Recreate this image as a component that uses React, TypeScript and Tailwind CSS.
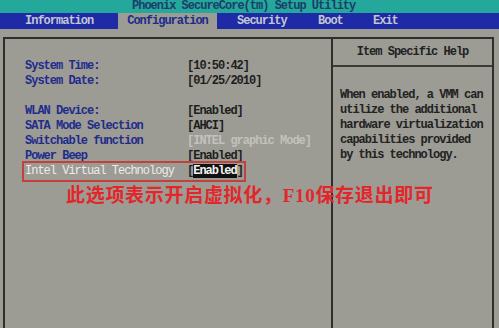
export default function App() {
  const bg = "bg-[#9c9b94]";
  return (
    <div className={`relative w-[499px] h-[328px] overflow-hidden ${bg} font-['Liberation_Mono',monospace] font-bold text-[12px] tracking-[-1px] leading-[15px] flex flex-col`}>
      <div className="h-[13px] shrink-0 bg-[#23a89b] text-[#1d3d6a] pl-[132px] leading-[13px]">
        Phoenix SecureCore(tm) Setup Utility
      </div>
      <div className="h-[16px] shrink-0 bg-[#1f2aa6] text-[#c4c6d2] flex leading-[16px]">
        <div className="w-[118px] pl-[25px]">Information</div>
        <div className={`w-[99px] ${bg} text-[#1e2b8a] text-center`}>Configuration</div>
        <div className="w-[101px] pl-[20px]">Security</div>
        <div className="w-[55px]">Boot</div>
        <div>Exit</div>
      </div>
      <div className="flex-1 pt-[8px] pl-[3px] pr-[5px]">
        <div className="h-full border-2 border-b-0 border-[#2e2e2c] flex">
          <div className="w-[328px] shrink-0 border-r-2 border-[#2e2e2c] pt-[20px] pl-[20px]">
            <Row label="System Time:" value="[10:50:42]" />
            <Row label="System Date:" value="[01/25/2010]" />
            <div className="h-[15px]" />
            <Row label="WLAN Device:" value="[Enabled]" />
            <Row label="SATA Mode Selection" value="[AHCI]" />
            <Row label="Switchable function" value="[INTEL graphic Mode]" dim />
            <Row label="Power Beep" value="[Enabled]" />
            <div className="flex w-fit outline-2 outline-[#c4403c] outline-offset-[1px]">
              <div className="w-[162px] text-[#ececea] font-normal">Intel Virtual Technology</div>
              <div className="text-[#1e1e1e]">
                [<span className="bg-[#111] text-[#f4f4f4]">Enabled</span>]
              </div>
            </div>
          </div>
          <div className="flex-1 flex flex-col">
            <div className="h-[28px] shrink-0 border-b-2 border-[#3a3a38] flex items-center justify-center text-[#222]">
              Item Specific Help
            </div>
            <div className="pt-[21px] pl-[7px] text-[#222] whitespace-pre">
              {"When enabled, a VMM can\nutilize the additional\nhardware virtualization\ncapabilities provided\nby this technology."}
            </div>
          </div>
        </div>
      </div>
      <div className="absolute left-[66px] top-[186px] text-[19px] leading-[20px] tracking-[0.7px] font-bold text-[#e2262a] font-['Liberation_Serif','Noto_Sans_CJK_SC',sans-serif]">
        此选项表示开启虚拟化，F10保存退出即可
      </div>
    </div>
  );
}

function Row({ label, value, dim }: { label: string; value: string; dim?: boolean }) {
  return (
    <div className="flex">
      <div className="w-[162px] text-[#1f2c8c]">{label}</div>
      <div className={dim ? "text-[#c2c2bc]" : "text-[#1e1e1e]"}>{value}</div>
    </div>
  );
}
